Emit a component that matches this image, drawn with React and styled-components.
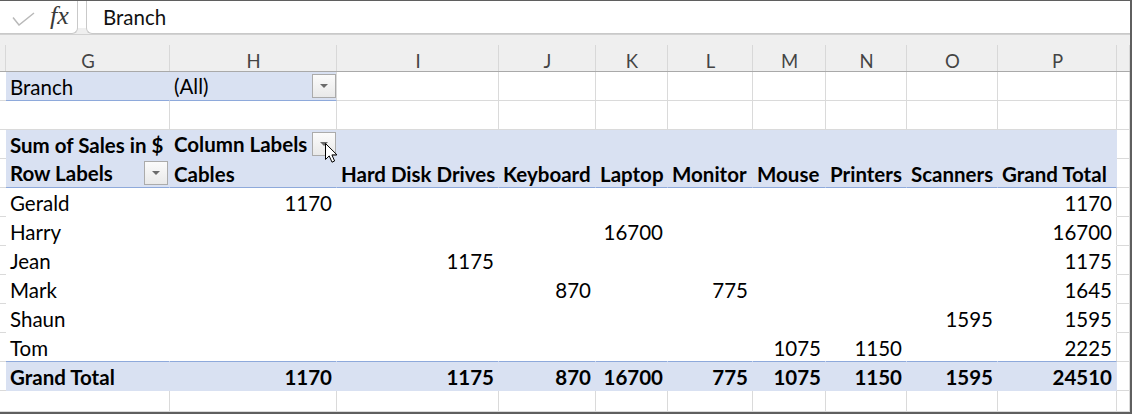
import React from 'react';
import styled, { createGlobalStyle } from 'styled-components';

const GRID = '#dadada';
const BLUE = '#d9e1f2';
const BLUE_LINE = '#8ea9db';
const COLS = '6px 164px 167px 162px 97px 72px 85px 73px 81px 91px 119px 1fr';

const Global = createGlobalStyle`
  html, body { margin: 0; padding: 0; background: #fff; }
  body { font-family: Lato, "Liberation Sans", sans-serif; }
`;

const Frame = styled.div`
  position: relative;
  width: 1132px;
  height: 414px;
  box-sizing: border-box;
  border-top: 1px solid #5f5f5f;
  border-right: 2px solid #5f5f5f;
  border-bottom: 2px solid #5f5f5f;
  overflow: hidden;
  background: #fff;
  display: flex;
  flex-direction: column;
`;

const FormulaBar = styled.div`
  display: flex;
  height: 33px;
  flex-shrink: 0;
  background: #efefef;
`;

const FuncBox = styled.div`
  width: 78px;
  box-sizing: border-box;
  background: #fff;
  border-right: 1px solid #c9c9c9;
  border-bottom: 1px solid #c9c9c9;
  border-bottom-right-radius: 6px;
  display: flex;
  align-items: center;
  padding-left: 12px;
`;

const Check = styled.svg`
  width: 23px;
  height: 14px;
  margin-top: 3px;
  flex-shrink: 0;
`;

const Fx = styled.span`
  font-family: "Liberation Serif", serif;
  font-style: italic;
  font-size: 26px;
  color: #3a3a3a;
  margin-left: 15px;
  margin-top: -3px;
`;

const BarGap = styled.div`
  width: 8px;
  background: linear-gradient(#fff, #fff) top / 100% 27px no-repeat;
`;

const InputBox = styled.div`
  flex: 1;
  background: #fff;
  border-left: 1px solid #c9c9c9;
  border-bottom: 1px solid #c9c9c9;
  border-bottom-left-radius: 6px;
  padding-left: 16px;
  display: flex;
  align-items: center;
  font-size: 20.5px;
  color: #111;
`;

const HeaderRow = styled.div`
  display: grid;
  grid-template-columns: ${COLS};
  height: 38px;
  flex-shrink: 0;
  box-sizing: border-box;
  background: #efefef;
  border-top: 1px solid #d2d2d2;
  border-bottom: 1px solid #a9a9a9;
`;

const ColLetter = styled.div`
  display: flex;
  justify-content: center;
  align-items: flex-end;
  font-size: 18.5px;
  line-height: 20px;
  color: #444;
  background: linear-gradient(#d8d8d8, #d8d8d8) right 10px / 1px calc(100% - 10px) no-repeat;
`;

const Row = styled.div`
  display: grid;
  grid-template-columns: ${COLS};
  height: ${(p) => p.$h || 29}px;
  flex-shrink: 0;
`;

const lineColor = (v) => (v === 'blue' ? BLUE_LINE : v === 'none' ? 'transparent' : GRID);

const Cell = styled.div`
  box-sizing: border-box;
  min-width: 0;
  display: flex;
  align-items: flex-end;
  justify-content: ${(p) => (p.$right ? 'flex-end' : 'space-between')};
  padding: 0 ${(p) => (p.$tight ? 0 : 4)}px ${(p) => (p.$tight ? 2 : 1)}px 4px;
  font-size: 20.5px;
  line-height: 24px;
  font-weight: ${(p) => (p.$bold ? 700 : 400)};
  color: #000;
  white-space: nowrap;
  background: ${(p) => (p.$fill ? BLUE : '#fff')};
  border-right: 1px solid ${(p) => lineColor(p.$v)};
  border-bottom: 1px solid ${(p) => lineColor(p.$h)};
`;

const Label = styled.span`
  align-self: flex-end;
`;

const Dropdown = styled.span`
  width: 24px;
  height: 24px;
  box-sizing: border-box;
  flex-shrink: 0;
  margin-right: ${(p) => p.$mr || 0}px;
  border: 1px solid #ababab;
  background: linear-gradient(#fbfbfb, #e9e9e9);
  display: flex;
  align-items: center;
  justify-content: center;
  &::after {
    content: '';
    border-left: 4px solid transparent;
    border-right: 4px solid transparent;
    border-top: 4px solid #6b6b6b;
  }
`;

const Cursor = styled.svg`
  position: absolute;
  left: 325px;
  top: 142px;
  width: 13px;
  height: 20px;
  overflow: visible;
`;

const letters = ['', 'G', 'H', 'I', 'J', 'K', 'L', 'M', 'N', 'O', 'P', ''];
const products = ['Cables', 'Hard Disk Drives', 'Keyboard', 'Laptop', 'Monitor', 'Mouse', 'Printers', 'Scanners', 'Grand Total'];
const people = [
  ['Gerald', [1170, null, null, null, null, null, null, null, 1170]],
  ['Harry', [null, null, null, 16700, null, null, null, null, 16700]],
  ['Jean', [null, 1175, null, null, null, null, null, null, 1175]],
  ['Mark', [null, null, 870, null, 775, null, null, null, 1645]],
  ['Shaun', [null, null, null, null, null, null, null, 1595, 1595]],
  ['Tom', [null, null, null, null, null, 1075, 1150, null, 2225]],
];
const totals = [1170, 1175, 870, 16700, 775, 1075, 1150, 1595, 24510];

const range = (n) => Array.from({ length: n }, (_, i) => i);

function PlainRow({ h }) {
  return (
    <Row $h={h}>
      {range(12).map((i) => (
        <Cell key={i} />
      ))}
    </Row>
  );
}

function BodyRow({ name, values, last }) {
  return (
    <Row>
      <Cell />
      <Cell $v="none" $h={last ? 'blue' : 'none'}>
        <Label>{name}</Label>
      </Cell>
      {values.map((v, i) => (
        <Cell key={i} $right $v={i === 8 ? 'grid' : 'none'} $h={last ? 'blue' : 'none'}>
          {v}
        </Cell>
      ))}
      <Cell />
    </Row>
  );
}

export default function App() {
  return (
    <>
      <Global />
      <Frame>
        <FormulaBar>
          <FuncBox>
            <Check viewBox="0 0 23 14">
              <polyline points="1,5.5 7,13 22,1" fill="none" stroke="#b9b9b9" strokeWidth="1.5" />
            </Check>
            <Fx>fx</Fx>
          </FuncBox>
          <BarGap />
          <InputBox>Branch</InputBox>
        </FormulaBar>

        <HeaderRow>
          {letters.map((l, i) => (
            <ColLetter key={i}>{l}</ColLetter>
          ))}
        </HeaderRow>

        <Row>
          <Cell />
          <Cell $fill $v="none" $h="blue">
            <Label>Branch</Label>
          </Cell>
          <Cell $fill $tight $v="grid" $h="blue">
            <Label>(All)</Label>
            <Dropdown $mr={0} />
          </Cell>
          {range(9).map((i) => (
            <Cell key={i} />
          ))}
        </Row>

        <PlainRow />

        <Row>
          <Cell />
          <Cell $fill $bold $v="none" $h="none">
            <Label>Sum of Sales in $</Label>
          </Cell>
          <Cell $fill $bold $tight $v="none" $h="none">
            <Label>Column Labels</Label>
            <Dropdown $mr={0} />
          </Cell>
          {range(8).map((i) => (
            <Cell key={i} $fill $v="none" $h="none" />
          ))}
          <Cell />
        </Row>

        <Row>
          <Cell />
          <Cell $fill $bold $tight $v="none" $h="blue">
            <Label>Row Labels</Label>
            <Dropdown $mr={1} />
          </Cell>
          {products.map((p) => (
            <Cell key={p} $fill $bold $v="none" $h="blue">
              <Label>{p}</Label>
            </Cell>
          ))}
          <Cell />
        </Row>

        {people.map(([name, values], idx) => (
          <BodyRow key={name} name={name} values={values} last={idx === people.length - 1} />
        ))}

        <Row>
          <Cell />
          <Cell $fill $bold $v="none" $h="none">
            <Label>Grand Total</Label>
          </Cell>
          {totals.map((v, i) => (
            <Cell key={i} $fill $bold $right $v="none" $h="none">
              {v}
            </Cell>
          ))}
          <Cell />
        </Row>

        <PlainRow h={21} />

        <Cursor viewBox="0 0 13 20">
          <path
            d="M0.5 0.5 L0.5 16.5 L4.2 12.9 L7 19.2 L9.6 18 L6.9 11.9 L12 11.9 Z"
            fill="#fff"
            stroke="#000"
            strokeWidth="1"
            strokeLinejoin="miter"
          />
        </Cursor>
      </Frame>
    </>
  );
}
